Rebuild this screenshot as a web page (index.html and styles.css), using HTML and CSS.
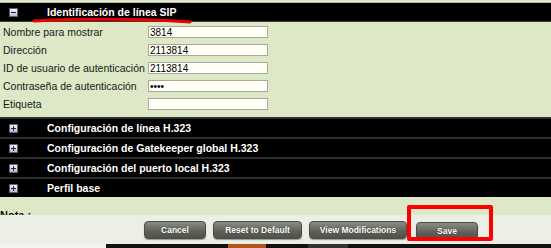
FILE: index.html
```html
<!DOCTYPE html>
<html lang="es">
  <head>
    <meta charset="UTF-8" />
    <title>Identificación de línea SIP</title>
    <link rel="stylesheet" href="styles.css">
  </head>
  <body>
    <div class="page">
      <div class="top-line"></div>

      <!-- Seccion abierta -->
      <div class="bar open">
        <span class="toggle minus"></span>
        <span class="bar-title">Identificación de línea SIP</span>
        <svg class="underline" width="170" height="8" viewBox="0 0 170 8">
          <path d="M2 5 C40 2, 120 3, 158 6" stroke="#ee0000" stroke-width="3" fill="none" stroke-linecap="round"/>
        </svg>
      </div>

      <div class="fields">
        <div class="row">
          <label>Nombre para mostrar</label>
          <input type="text" value="3814">
        </div>
        <div class="row">
          <label>Dirección</label>
          <input type="text" value="2113814">
        </div>
        <div class="row">
          <label>ID de usuario de autenticación</label>
          <input type="text" value="2113814">
        </div>
        <div class="row">
          <label>Contraseña de autenticación</label>
          <input type="password" value="1234">
        </div>
        <div class="row">
          <label>Etiqueta</label>
          <input type="text" value="">
        </div>
      </div>

      <!-- Secciones cerradas -->
      <div class="sections">
        <div class="bar"><span class="toggle plus"></span><span class="bar-title">Configuración de línea H.323</span></div>
        <div class="bar"><span class="toggle plus"></span><span class="bar-title">Configuración de Gatekeeper global H.323</span></div>
        <div class="bar"><span class="toggle plus"></span><span class="bar-title">Configuración del puerto local H.323</span></div>
        <div class="bar"><span class="toggle plus"></span><span class="bar-title">Perfil base</span></div>
      </div>

      <div class="note">Nota :</div>
    </div>

    <!-- Botones -->
    <div class="footer">
      <button class="btn btn-cancel">Cancel</button>
      <button class="btn btn-reset">Reset to Default</button>
      <button class="btn btn-view">View Modifications</button>
      <div class="save-wrap">
        <button class="btn btn-save">Save</button>
        <div class="highlight"></div>
      </div>
    </div>

    <div class="bottom-strip">
      <div class="strip-light"></div>
      <div class="strip-dark">
        <span class="strip-orange"></span>
        <span class="strip-gray"></span>
      </div>
    </div>
  </body>
</html>
```

FILE: styles.css
```css
body {
  margin: 0;
  width: 551px;
  height: 248px;
  overflow: hidden;
  font-family: "Liberation Sans", Arial, sans-serif;
  background-color: #dde8c6;
}

.page {
  height: 215px;
  overflow: hidden;
}

.top-line {
  height: 2px;
  border-bottom: 1px solid #b9bbb3;
}

/* Barras negras */
.bar {
  position: relative;
  display: flex;
  align-items: center;
  height: 18px;
  background-color: #000;
  border-bottom: 1px solid #3c3f35;
}

.sections .bar {
  border-top: 2px solid #2e2e2e;
  border-bottom: none;
}

.bar-title {
  margin-left: 29px;
  color: #fff;
  font-weight: bold;
  font-size: 10.5px;
  white-space: nowrap;
}

.toggle {
  position: relative;
  width: 7px;
  height: 7px;
  margin-left: 9px;
  border: 1px solid #5a5f78;
  background: linear-gradient(#f4f6fb, #b8bdd0);
}

.toggle::before {
  content: "";
  position: absolute;
  left: 1px;
  top: 3px;
  width: 5px;
  height: 1px;
  background-color: #22263a;
}

.plus::after {
  content: "";
  position: absolute;
  left: 3px;
  top: 1px;
  width: 1px;
  height: 5px;
  background-color: #22263a;
}

.underline {
  position: absolute;
  left: 32px;
  top: 13px;
}

/* Campos */
.fields {
  padding: 1px 0 4px 0;
}

.row {
  display: flex;
  align-items: center;
  height: 18px;
}

.row label {
  width: 148px;
  padding-left: 3px;
  box-sizing: border-box;
  font-size: 10.5px;
  white-space: nowrap;
  color: #1a1a1a;
}

.row input {
  width: 120px;
  height: 12px;
  box-sizing: border-box;
  padding: 0 1px;
  border: 1px solid #a8a89c;
  background-color: #fffff6;
  font-family: "Liberation Sans", Arial, sans-serif;
  font-size: 10px;
  color: #000;
}

.note {
  margin-top: 12px;
  padding-left: 0;
  font-size: 11px;
  font-weight: bold;
  color: #111;
}

/* Pie con botones */
.footer {
  display: flex;
  align-items: center;
  height: 29px;
  padding-left: 144px;
  background-color: #ecefe6;
}

.btn {
  height: 18px;
  margin-right: 7px;
  border: 1px solid #4a4c45;
  border-radius: 4px;
  background: linear-gradient(#8a8d84, #5d6057 60%, #4f5249);
  color: #fff;
  font-family: "Liberation Sans", Arial, sans-serif;
  font-size: 8.5px;
  font-weight: bold;
  text-shadow: 0 0 1px #222;
  box-shadow: 0 1px 1px #9a9c94;
}

.btn-cancel {
  width: 62px;
}

.btn-reset {
  width: 89px;
}

.btn-view {
  width: 98px;
}

.btn-save {
  width: 62px;
}

.save-wrap {
  position: relative;
  margin-left: 2px;
}

.highlight {
  position: absolute;
  left: -9px;
  top: -15px;
  width: 78px;
  height: 28px;
  border: 4px solid #ff0000;
  border-radius: 2px;
}

/* Franja inferior */
.bottom-strip {
  display: flex;
  height: 4px;
}

.strip-light {
  width: 106px;
  background-color: #f2f2ee;
}

.strip-dark {
  display: flex;
  flex: 1;
  background-color: #111;
}

.strip-orange {
  width: 38px;
  margin-left: 122px;
  background-color: #b4561c;
}

.strip-gray {
  width: 40px;
  margin-left: 42px;
  background-color: #333;
}
```
